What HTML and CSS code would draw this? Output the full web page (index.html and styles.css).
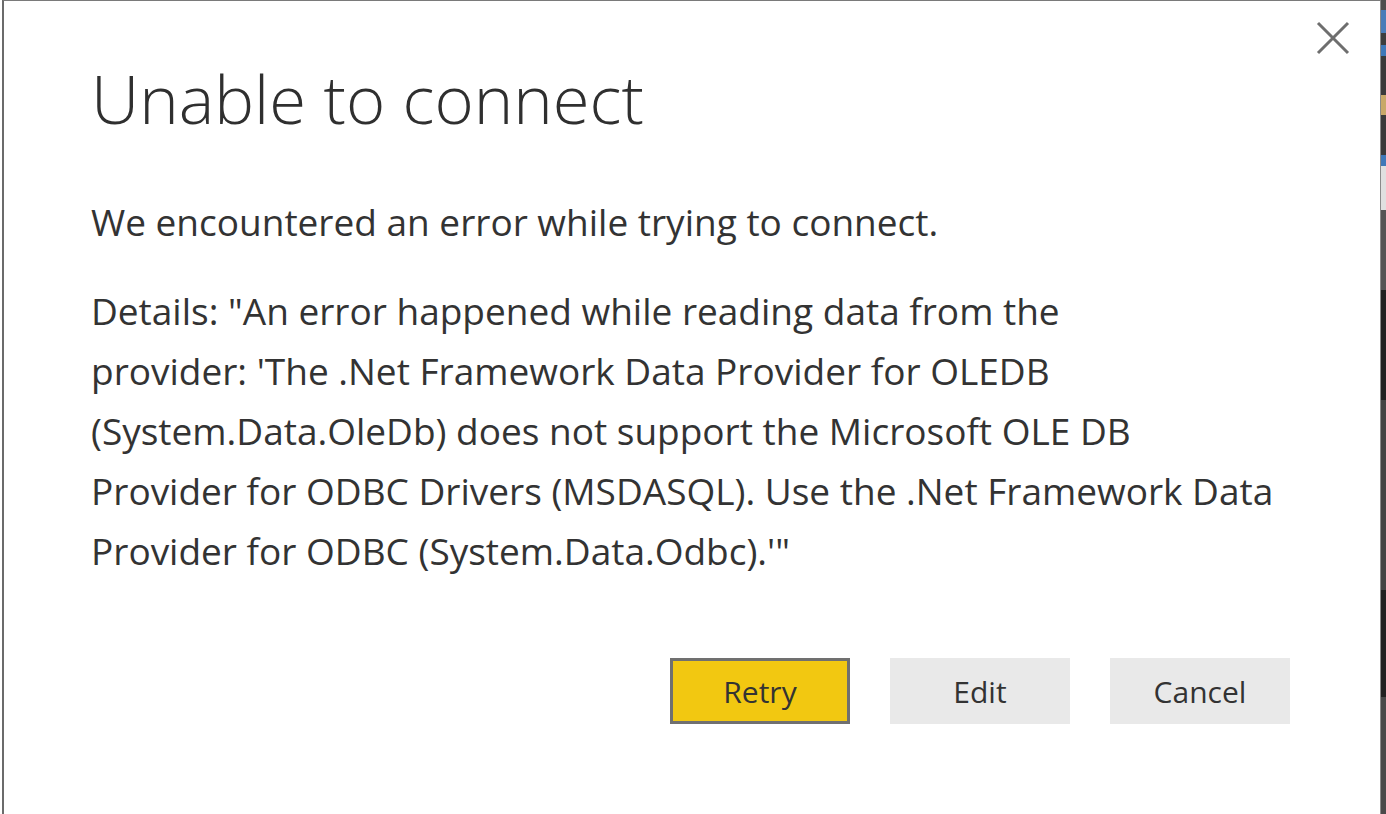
FILE: index.html
```html
<!DOCTYPE html>
<html lang="en">
<head>
<meta charset="utf-8">
<title>Unable to connect</title>
<link rel="stylesheet" href="styles.css">
</head>
<body>
<div class="screen">
  <div class="dialog">
    <button class="close" aria-label="Close">
      <svg width="34" height="34" viewBox="0 0 34 34"><path d="M2 2 L32 32 M32 2 L2 32" stroke="#6e6e6e" stroke-width="3" fill="none"/></svg>
    </button>
    <h1 class="title">Unable to connect</h1>
    <p class="message">We encountered an error while trying to connect.</p>
    <p class="details">Details: "An error happened while reading data from the<br>provider: 'The .Net Framework Data Provider for OLEDB<br>(System.Data.OleDb) does not support the Microsoft OLE DB<br>Provider for ODBC Drivers (MSDASQL). Use the .Net Framework Data<br>Provider for ODBC (System.Data.Odbc).'"</p>
    <div class="actions">
      <button class="btn btn-primary">Retry</button>
      <button class="btn">Edit</button>
      <button class="btn">Cancel</button>
    </div>
  </div>
  <div class="strip"></div>
</div>
</body>
</html>
```
FILE: styles.css
```css
html, body {
  margin: 0;
  padding: 0;
  background: #ffffff;
}
.screen {
  display: flex;
  width: 1386px;
  height: 814px;
  overflow: hidden;
}
.dialog {
  position: relative;
  flex: 1;
  margin-left: 2px;
  border-left: 2px solid #6b6b6b;
  border-top: 1px solid #7a7a7a;
  border-right: 1px solid #8a8a8a;
  background: #ffffff;
  padding-left: 87px;
  font-family: "Open Sans", "Noto Sans", sans-serif;
  color: #333333;
}
.strip {
  width: 5px;
  background: linear-gradient(to bottom,
    #4d4d4d 0px, #4d4d4d 10px,
    #4a7cb8 10px, #4a7cb8 33px,
    #3d3d3d 33px, #3d3d3d 45px,
    #3f78b8 45px, #3f78b8 56px,
    #3a3a3a 56px, #3a3a3a 95px,
    #c8a868 95px, #c8a868 115px,
    #3a3a3a 115px, #3a3a3a 155px,
    #3f78b8 155px, #3f78b8 166px,
    #e0e0e0 166px, #e0e0e0 210px,
    #555555 210px, #555555 290px,
    #222222 290px, #222222 400px,
    #444444 400px, #444444 590px,
    #222222 590px, #222222 697px,
    #4a4a4a 697px, #4a4a4a 814px);
}
.close {
  position: absolute;
  top: 20px;
  right: 30px;
  width: 34px;
  height: 34px;
  padding: 0;
  border: 0;
  background: transparent;
}
.close svg { display: block; }
.title {
  margin: 0;
  padding-top: 52px;
  font-size: 67px;
  font-weight: 300;
  line-height: 90px;
  color: #2f2f2f;
}
.message {
  margin: 0;
  margin-top: 49px;
  font-size: 37px;
  line-height: 60px;
}
.details {
  margin: 0;
  margin-top: 29px;
  font-size: 37px;
  line-height: 60px;
  white-space: nowrap;
}
.actions {
  display: flex;
  gap: 40px;
  margin-top: 77px;
  padding-left: 579px;
}
.btn {
  width: 180px;
  height: 66px;
  border: 0;
  background: #e9e9e9;
  font-family: "Open Sans", "Noto Sans", sans-serif;
  font-size: 30px;
  color: #333333;
  padding: 0;
}
.btn-primary {
  background: #f2c811;
  border: 3px solid #707070;
}
```
